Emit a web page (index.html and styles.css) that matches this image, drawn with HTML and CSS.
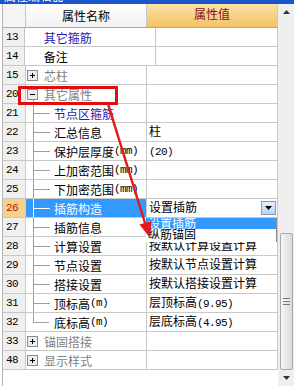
FILE: index.html
```html
<!DOCTYPE html>
<html lang="zh-CN">
<head>
    <meta charset="UTF-8">
    <title>属性编辑器</title>
    <link rel="stylesheet" href="styles.css">
</head>
<body>
    <div class="titlebar"><span>属性编辑器</span></div>

    <div class="panel">
        <div class="grid">
            <div class="row head">
                <div class="num"></div>
                <div class="name">属性名称</div>
                <div class="val">属性值</div>
            </div>

            <div class="row"><div class="num">13</div><div class="name plain blue">其它箍筋</div><div class="val"></div></div>
            <div class="row"><div class="num">14</div><div class="name plain">备注</div><div class="val"></div></div>
            <div class="row">
                <div class="num">15</div>
                <div class="name group"><svg class="box" width="11" height="11" viewBox="0 0 11 11"><rect x="0.5" y="0.5" width="10" height="10" fill="#ececec" stroke="#8c8c8c"/><path d="M3 5.5h5M5.5 3v5" stroke="#000"/></svg>芯柱</div>
                <div class="val"></div>
            </div>
            <div class="row">
                <div class="num">20</div>
                <div class="name group"><span class="open"><svg class="box" width="11" height="11" viewBox="0 0 11 11"><rect x="0.5" y="0.5" width="10" height="10" fill="#ececec" stroke="#8c8c8c"/><path d="M3 5.5h5" stroke="#000"/></svg></span>其它属性</div>
                <div class="val"></div>
            </div>
            <div class="row"><div class="num">21</div><div class="name"><span class="tree"></span><span class="blue">节点区箍筋</span></div><div class="val"></div></div>
            <div class="row"><div class="num">22</div><div class="name"><span class="tree"></span>汇总信息</div><div class="val">柱</div></div>
            <div class="row"><div class="num">23</div><div class="name"><span class="tree"></span>保护层厚度<span class="en">(mm)</span></div><div class="val"><span class="en">(20)</span></div></div>
            <div class="row"><div class="num">24</div><div class="name"><span class="tree"></span>上加密范围<span class="en">(mm)</span></div><div class="val"></div></div>
            <div class="row"><div class="num">25</div><div class="name"><span class="tree"></span>下加密范围<span class="en">(mm)</span></div><div class="val"></div></div>
            <div class="row sel">
                <div class="num">26</div>
                <div class="name"><span class="tree"></span>插筋构造</div>
                <div class="val combo">
                    <span class="combo-text">设置插筋</span>
                    <span class="drop"><svg width="7" height="4" viewBox="0 0 7 4"><path d="M0 0h7L3.5 4z" fill="#000"/></svg></span>
                </div>
            </div>
            <div class="row"><div class="num">27</div><div class="name"><span class="tree"></span>插筋信息</div><div class="val"></div></div>
            <div class="row"><div class="num">28</div><div class="name"><span class="tree"></span>计算设置</div><div class="val">按默认计算设置计算</div></div>
            <div class="row"><div class="num">29</div><div class="name"><span class="tree"></span>节点设置</div><div class="val">按默认节点设置计算</div></div>
            <div class="row"><div class="num">30</div><div class="name"><span class="tree"></span>搭接设置</div><div class="val">按默认搭接设置计算</div></div>
            <div class="row"><div class="num">31</div><div class="name"><span class="tree"></span>顶标高<span class="en">(m)</span></div><div class="val">层顶标高<span class="en">(9.95)</span></div></div>
            <div class="row"><div class="num">32</div><div class="name"><span class="tree last"></span>底标高<span class="en">(m)</span></div><div class="val">层底标高<span class="en">(4.95)</span></div></div>
            <div class="row">
                <div class="num">33</div>
                <div class="name group"><svg class="box" width="11" height="11" viewBox="0 0 11 11"><rect x="0.5" y="0.5" width="10" height="10" fill="#ececec" stroke="#8c8c8c"/><path d="M3 5.5h5M5.5 3v5" stroke="#000"/></svg>锚固搭接</div>
                <div class="val"></div>
            </div>
            <div class="row">
                <div class="num">48</div>
                <div class="name group"><svg class="box" width="11" height="11" viewBox="0 0 11 11"><rect x="0.5" y="0.5" width="10" height="10" fill="#ececec" stroke="#8c8c8c"/><path d="M3 5.5h5M5.5 3v5" stroke="#000"/></svg>显示样式</div>
                <div class="val"></div>
            </div>
        </div>

        <div class="scroll">
            <div class="sb-btn"><svg width="7" height="4" viewBox="0 0 7 4"><path d="M3.5 0L7 4H0z" fill="#333"/></svg></div>
            <div class="sb-track"></div>
            <div class="sb-thumb"><span class="grip"></span></div>
            <div class="sb-btn"><svg width="7" height="4" viewBox="0 0 7 4"><path d="M0 0h7L3.5 4z" fill="#333"/></svg></div>
        </div>

        <!-- open dropdown of row 26 -->
        <div class="droplist">
            <div class="item hot">设置插筋</div>
            <div class="item">纵筋锚固</div>
        </div>

        <!-- annotation drawn over the screenshot -->
        <div class="mark"></div>
        <svg class="arrow" width="294" height="382" viewBox="0 4 294 382">
            <line x1="108" y1="104" x2="145" y2="223" stroke="#e11b1b" stroke-width="2.5"/>
            <polygon points="150,238 139.5,224.5 151.5,221" fill="#e11b1b"/>
        </svg>
    </div>
</body>
</html>
```

FILE: styles.css
```css
body {
    margin: 0;
    width: 294px;
    height: 386px;
    overflow: hidden;
    background: #fff;
    font-family: "Liberation Sans", "Noto Sans CJK SC", sans-serif;
    font-size: 12px;
    color: #000;
}

.titlebar {
    height: 4px;
    overflow: hidden;
    background: #1a56c9;
    color: #fff;
    padding-left: 4px;
}

.titlebar span {
    display: block;
    line-height: 12px;
    margin-top: -9px;
}

.panel {
    position: relative;
    display: flex;
    height: 382px;
}

.grid {
    width: 275px;
    margin-left: 2px;
    border-left: 1px solid #b4b4b4;
}

.row {
    display: flex;
    height: 18px;
    border-bottom: 1px solid #c8c8c8;
}

/* half-width latin text, 6px per char like the original bitmap font */
.en,
.num {
    font-family: "Liberation Mono", monospace;
    font-size: 11px;
    letter-spacing: -0.6px;
}

.num {
    width: 19px;
    padding-left: 3px;
    border-right: 1px solid #c8c8c8;
    background: #f0f0f0;
    line-height: 18px;
}

.name {
    width: 120px;
    border-right: 1px solid #c8c8c8;
    display: flex;
    align-items: center;
    white-space: nowrap;
    overflow: hidden;
}

.val {
    width: 128px;
    padding-left: 2px;
    border-right: 1px solid #c8c8c8;
    line-height: 18px;
    white-space: nowrap;
    overflow: hidden;
}

.head {
    height: 23px;
    border-bottom: 1px solid #a8a8a8;
}

.head .num {
    background: #f4f4f4;
}

.head .name {
    justify-content: center;
    background: linear-gradient(#ffffff, #f1f1f1);
}

.head .val {
    padding-left: 0;
    width: 130px;
    text-align: center;
    line-height: 23px;
    color: #8a0f1e;
    background: linear-gradient(#fbe2a4, #f3c266);
}

.plain {
    padding-left: 19px;
}

.blue {
    color: #1c1cb4;
}

.group {
    color: #7f7f7f;
}

.box {
    display: block;
    margin: 0 6px 0 1px;
}

.open {
    position: relative;
}

.open::after {
    content: "";
    position: absolute;
    left: 7px;
    top: 11px;
    width: 1px;
    height: 5px;
    background: #a0a0a0;
}

.tree {
    position: relative;
    align-self: stretch;
    width: 20px;
    margin-left: 7px;
    border-left: 1px solid #a0a0a0;
    flex-shrink: 0;
}

.tree::after {
    content: "";
    position: absolute;
    left: 0;
    top: 9px;
    width: 16px;
    height: 1px;
    background: #a0a0a0;
}

.tree.last {
    border-left: none;
    margin-left: 8px;
}

.tree.last::before {
    content: "";
    position: absolute;
    left: -1px;
    top: 0;
    width: 1px;
    height: 10px;
    background: #a0a0a0;
}

.tree.last::after {
    left: -1px;
}

.sel .num {
    background: #fbd08b;
    color: #9b1a08;
}

.sel .name {
    background: #3399ff;
    color: #fff;
}

.sel .tree {
    border-left-color: #fff;
}

.sel .tree::after {
    background: #fff;
}

.combo {
    display: flex;
    align-items: center;
    justify-content: space-between;
    padding-right: 1px;
    width: 127px;
}

.drop {
    width: 15px;
    height: 14px;
    display: flex;
    align-items: center;
    justify-content: center;
    border: 1px solid #7f9db9;
    background: linear-gradient(#e6efff, #bcd2f4);
    box-sizing: border-box;
}

.scroll {
    width: 16px;
    display: flex;
    flex-direction: column;
    background: #efefef;
}

.sb-btn {
    height: 16px;
    display: flex;
    align-items: center;
    justify-content: center;
}

.sb-track {
    flex: 1;
}

.sb-thumb {
    height: 135px;
    margin: 0 1px 0 2px;
    border: 1px solid #a8a8a8;
    border-radius: 2px;
    background: linear-gradient(to right, #f6f6f6, #dadada);
    display: flex;
    align-items: center;
    justify-content: center;
}

.grip {
    width: 7px;
    height: 5px;
    border-top: 1px solid #777;
    border-bottom: 1px solid #777;
    background: linear-gradient(#fff 0 1px, #777 1px 2px, #fff 2px);
    background-size: 100% 2px;
    background-position: 0 1px;
    background-repeat: no-repeat;
}

.droplist {
    position: absolute;
    left: 146px;
    top: 214px;
    width: 131px;
    height: 24px;
    background: #fff;
    border-right: 1px solid #8c8c8c;
    box-sizing: border-box;
}

.item {
    height: 12px;
    line-height: 12px;
    padding-left: 2px;
    white-space: nowrap;
    overflow: hidden;
}

.item.hot {
    height: 11px;
    line-height: 12px;
    background: #3399ff;
    color: #fff;
}

.mark {
    position: absolute;
    left: 18px;
    top: 82px;
    width: 94px;
    height: 13px;
    border: 3px solid #e00f0f;
}

.arrow {
    position: absolute;
    left: 0;
    top: 0;
}
```
